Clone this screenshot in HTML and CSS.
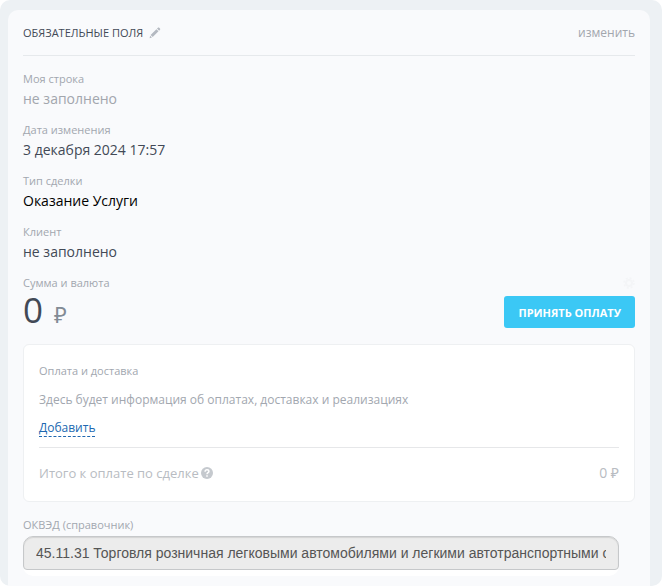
FILE: index.html
```html
<!DOCTYPE html>
<html lang="ru">
<head>
    <meta charset="utf-8">
    <meta name="viewport" content="width=device-width, initial-scale=1">
    <title>Сделка</title>
    <link rel="stylesheet" href="styles.css">
</head>
<body>
    <div class="wrap">
        <section class="section">
            <div class="header">
                <h2 class="title">Обязательные поля</h2>
                <button class="edit-icon" type="button" aria-label="Переименовать">
                    <svg width="12" height="12" viewBox="0 0 12 12">
                        <path fill="#b4b9c1" d="M1.6 8 7.4 2.2l2.1 2.1-5.8 5.8zM8 1.6 8.9.7c.4-.4.9-.4 1.3 0l.8.8c.4.4.4.9 0 1.3l-.9.9zM1.1 8.7l1.9 1.9-2.4.6z"/>
                    </svg>
                </button>
                <button class="change" type="button">изменить</button>
            </div>
            <div class="content">
                <div class="field">
                    <div class="label">Моя строка</div>
                    <div class="value value-empty">не заполнено</div>
                </div>
                <div class="field">
                    <div class="label">Дата изменения</div>
                    <div class="value">3 декабря 2024 17:57</div>
                </div>
                <div class="field">
                    <div class="label">Тип сделки</div>
                    <div class="value value-black">Оказание Услуги</div>
                </div>
                <div class="field">
                    <div class="label">Клиент</div>
                    <div class="value">не заполнено</div>
                </div>
                <div class="label-row">
                    <div class="label">Сумма и валюта</div>
                    <button class="settings" type="button" aria-label="Настройки">
                        <svg width="12" height="12" viewBox="0 0 12 12">
                            <circle cx="6" cy="6" r="3" fill="none" stroke="#f4f5f7" stroke-width="2"/>
                            <circle cx="6" cy="6" r="5" fill="none" stroke="#f4f5f7" stroke-width="1.5" stroke-dasharray="2 1.93"/>
                        </svg>
                    </button>
                </div>
                <div class="money">
                    <div class="sum">0<span class="currency">₽</span></div>
                    <button class="pay" type="button">Принять оплату</button>
                </div>

                <div class="payment">
                    <div class="label">Оплата и доставка</div>
                    <p class="info">Здесь будет информация об оплатах, доставках и реализациях</p>
                    <a class="add" href="#">Добавить</a>
                    <div class="total">
                        <span>Итого к оплате по сделке</span>
                        <svg class="hint" width="12" height="12" viewBox="0 0 12 12">
                            <circle cx="6" cy="6" r="6" fill="#c5c9ce"/>
                            <path fill="none" stroke="#fff" stroke-width="1.5" d="M4.1 4.7C4.1 3.5 4.9 2.8 6 2.8s1.9.7 1.9 1.7C7.9 5.7 6 5.7 6 7.3"/>
                            <path fill="#fff" d="M5.2 8.2h1.6v1.5H5.2z"/>
                        </svg>
                        <span class="total-sum">0 ₽</span>
                    </div>
                </div>

                <label class="label" for="okved">ОКВЭД (справочник)</label>
                <div class="input-box">
                    <input class="input" id="okved" type="text" readonly value="45.11.31 Торговля розничная легковыми автомобилями и легкими автотранспортными средствами">
                </div>
            </div>
        </section>
    </div>
</body>
</html>
```

FILE: styles.css
```css
* {
    box-sizing: border-box;
    margin: 0;
    padding: 0;
}

body {
    background: #fff;
    color: #424956;
    font-family: "Open Sans", "Noto Sans", sans-serif;
}

button {
    border: none;
    background: none;
    font-family: inherit;
    cursor: pointer;
}

.wrap {
    padding: 10px 12px 0 8px;
    background: #edf1f4;
    border-radius: 10px;
}

.section {
    padding: 0 15px 10px;
    background: #f9fafc;
    border-radius: 10px 10px 0 0;
}

.header {
    display: flex;
    align-items: center;
    height: 46px;
    border-bottom: 1px solid #e6e9ec;
}

.title {
    font-size: 11px;
    font-weight: 500;
    text-transform: uppercase;
    color: #424956;
}

.edit-icon {
    display: flex;
    margin-left: 6px;
}

.change {
    margin-left: auto;
    font-size: 12px;
    color: #a2a6ad;
}

.content {
    padding-top: 15px;
}

.field {
    margin-bottom: 11px;
}

.label-row {
    display: flex;
    align-items: center;
    justify-content: space-between;
}

.settings {
    display: flex;
}

.label {
    display: block;
    font-size: 11px;
    line-height: 16px;
    color: #a2a7af;
}

.value {
    font-size: 14px;
    line-height: 24px;
}

.value-empty {
    color: #a2a6ad;
}

.value-black {
    color: #000;
}

.money {
    display: flex;
    align-items: center;
    justify-content: space-between;
    height: 42px;
    margin-bottom: 11px;
}

.sum {
    font-size: 35px;
    line-height: 42px;
}

.currency {
    margin-left: 11px;
    font-size: 22px;
    color: #828b95;
}

.pay {
    height: 32px;
    padding: 0 14px;
    border-radius: 3px;
    background: #3bc8f5;
    font-size: 11px;
    font-weight: 700;
    text-transform: uppercase;
    color: #fff;
}

.payment {
    margin-bottom: 15px;
    padding: 18px 15px 16px;
    background: #fff;
    border: 1px solid #eef0f2;
    border-radius: 6px;
}

.info {
    margin: 12px 0 11px;
    font-size: 12px;
    line-height: 18px;
    color: #a2a7af;
}

.add {
    display: table;
    border-bottom: 1px dashed #2067b0;
    font-size: 12px;
    line-height: 16px;
    color: #2067b0;
    text-decoration: none;
}

.total {
    display: flex;
    align-items: center;
    margin-top: 10px;
    padding-top: 13px;
    border-top: 1px solid #e6e7e9;
    font-size: 13px;
    line-height: 24px;
    color: #b8bcc2;
}

.hint {
    margin-left: 2px;
}

.total-sum {
    margin-left: auto;
    font-size: 14px;
}

.input-box {
    margin: 3px 16px 0 0;
    padding-bottom: 6px;
    background: #fff;
    border-radius: 10px;
}

.input {
    display: block;
    width: 100%;
    height: 34px;
    padding: 0 12px;
    border: 1px solid #c6c8ca;
    border-radius: 10px 10px 4px 4px;
    background: #ececec;
    box-shadow: inset 0 1px 1px #d4d4d4;
    font-family: "Liberation Sans", Arial, sans-serif;
    font-size: 14px;
    color: #555;
}
```
